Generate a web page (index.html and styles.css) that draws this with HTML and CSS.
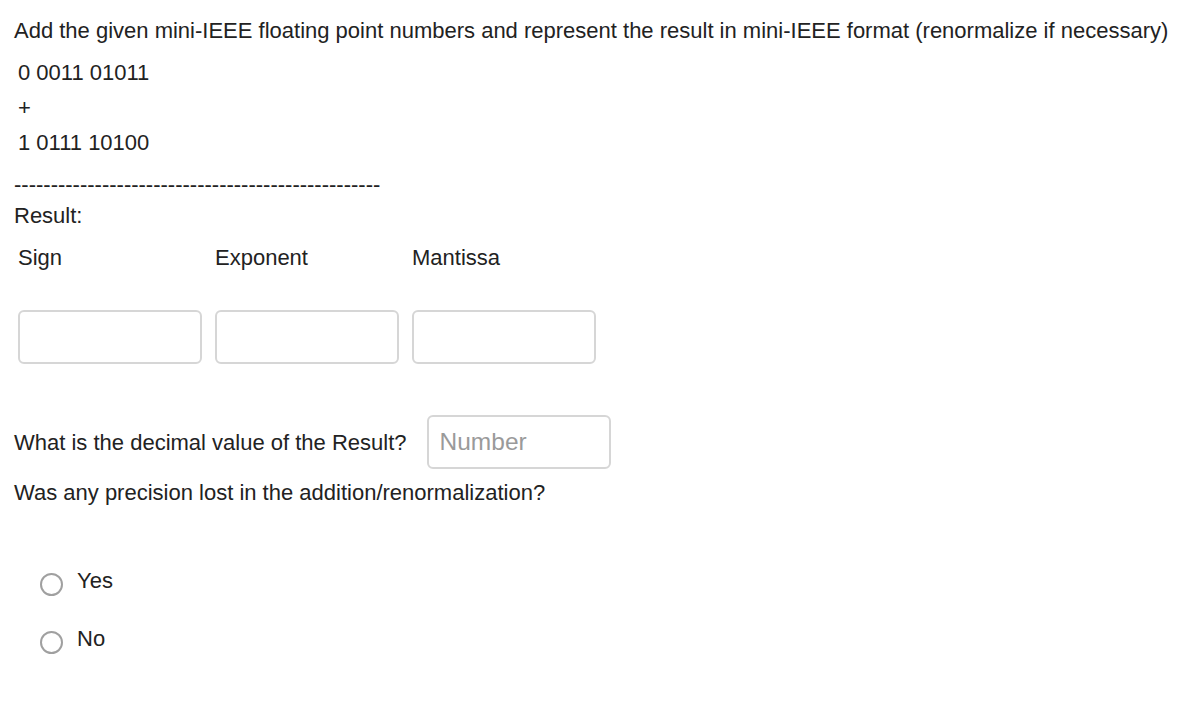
FILE: index.html
```html
<!DOCTYPE html>
<html lang="en">
<head>
<meta charset="utf-8">
<title>mini-IEEE addition</title>
<link rel="stylesheet" href="styles.css">
</head>
<body>
<main class="question">
  <p class="prompt">Add the given mini-IEEE floating point numbers and represent the result in mini-IEEE format (renormalize if necessary)</p>
  <div class="operands">
    <div class="operand">0 0011 01011</div>
    <div class="operand">+</div>
    <div class="operand">1 0111 10100</div>
  </div>
  <div class="rule">--------------------------------------------------</div>
  <div class="result-label">Result:</div>
  <div class="fields labels">
    <span>Sign</span>
    <span>Exponent</span>
    <span>Mantissa</span>
  </div>
  <div class="fields boxes">
    <input class="box" type="text" aria-label="Sign">
    <input class="box" type="text" aria-label="Exponent">
    <input class="box" type="text" aria-label="Mantissa">
  </div>
  <div class="decimal-row">
    <span class="decimal-text">What is the decimal value of the Result?</span>
    <input class="box number" type="text" placeholder="Number">
  </div>
  <div class="precision">Was any precision lost in the addition/renormalization?</div>
  <div class="choices">
    <label class="choice"><input class="radio" type="radio" name="lost"><span>Yes</span></label>
    <label class="choice second"><input class="radio" type="radio" name="lost"><span>No</span></label>
  </div>
</main>
</body>
</html>
```

FILE: styles.css
```css
html, body {
  margin: 0;
  padding: 0;
  background: #ffffff;
}

.question {
  font-family: "Liberation Sans", Arial, sans-serif;
  font-size: 22px;
  line-height: 28px;
  color: #222222;
  padding: 17px 0 40px 14px;
}

.prompt {
  margin: 0;
  white-space: nowrap;
}

.operands {
  margin-top: 10px;
  padding-left: 4px;
}

.operand {
  line-height: 35px;
}

.rule {
  margin-top: 11px;
}

.result-label {
  margin-top: 3px;
}

.fields {
  display: grid;
  grid-template-columns: 184px 184px 184px;
  column-gap: 13px;
  padding-left: 4px;
}

.labels {
  margin-top: 14px;
}

.boxes {
  margin-top: 38px;
}

.box {
  box-sizing: border-box;
  width: 184px;
  height: 54px;
  margin: 0;
  border: 2px solid #d6d6d6;
  border-radius: 6px;
  background: #ffffff;
  font-family: "Liberation Sans", Arial, sans-serif;
  font-size: 24.5px;
  padding: 0 11px;
  color: #222222;
  outline: none;
}

.decimal-row {
  display: flex;
  align-items: baseline;
  margin-top: 51px;
  gap: 20px;
}

.number::placeholder {
  color: #9a9a9a;
  opacity: 1;
}

.precision {
  margin-top: 10px;
}

.choices {
  padding-left: 26px;
}

.choice {
  display: flex;
  align-items: flex-start;
  gap: 14px;
  min-height: 30px;
  margin-top: 60px;
}

.choice.second {
  margin-top: 28px;
}

.radio {
  appearance: none;
  -webkit-appearance: none;
  box-sizing: border-box;
  flex: none;
  width: 23px;
  height: 23px;
  margin: 6px 0 0 0;
  border: 2px solid #a0a0a0;
  border-radius: 50%;
  background: #ffffff;
}
```
